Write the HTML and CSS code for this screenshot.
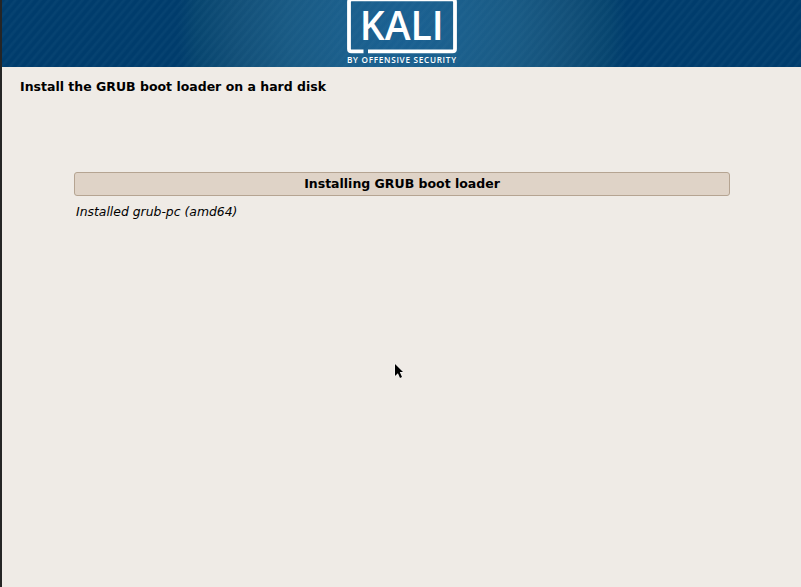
FILE: index.html
```html
<!DOCTYPE html>
<html lang="en">
<head>
<meta charset="utf-8">
<title>Install the GRUB boot loader on a hard disk</title>
<link rel="stylesheet" href="styles.css">
</head>
<body>
<div class="installer">
  <header class="banner">
    <svg class="logo" width="121" height="67" viewBox="0 0 121 67" role="img" aria-label="Kali by Offensive Security">
      <path class="frame" d="M22.500 51.400H10.500q-2.500 0-2.500-2.500V2q0-2.600 2.500-2.600H111.500q2.500 0 2.500 2.600V48.900q0 2.500-2.500 2.500H27"/>
      <text class="name" x="18.800" y="40" textLength="84" lengthAdjust="spacingAndGlyphs">KALI</text>
      <text class="tagline" x="6" y="63" textLength="109">BY OFFENSIVE SECURITY</text>
    </svg>
  </header>
  <main class="content">
    <h1 class="title">Install the GRUB boot loader on a hard disk</h1>
    <section class="task">
      <div class="progress">Installing GRUB boot loader</div>
      <p class="status">Installed grub-pc (amd64)</p>
    </section>
  </main>
</div>
<svg class="pointer" width="10" height="17" viewBox="0 0 10 17" aria-hidden="true">
  <path d="M1 1L9 9H5.800L8 14L6 15L3.900 10.300L1 13Z"/>
</svg>
</body>
</html>
```
FILE: styles.css
```css
* { box-sizing: border-box; }

body {
  margin: 0;
  height: 587px;
  overflow: hidden;
  font-family: "DejaVu Sans", sans-serif;
  font-size: 12.500px;
  line-height: 16px;
  color: #000;
}

.installer {
  height: 587px;
  border-left: 2px solid #252525;
  background: #efebe6;
}

.banner {
  display: flex;
  justify-content: center;
  height: 67px;
  background:
    repeating-linear-gradient(130deg, rgba(70, 130, 165, 0) 0 2px, rgba(70, 130, 165, 0.09) 3.500px 4.500px, rgba(70, 130, 165, 0) 6.400px),
    radial-gradient(circle 225px at 400px 28px, #1a6092 0, #1b5f8c 28%, #195a84 52%, #124f78 75%, #07456f 92%, #003c6c 100%);
}

.logo { display: block; }

.frame {
  fill: none;
  stroke: #fff;
  stroke-width: 3.800px;
}

.name {
  fill: #fff;
  font: 600 39.300px "Open Sans", sans-serif;
}

.tagline {
  fill: #fff;
  font: 600 8.200px "Open Sans", sans-serif;
}

.content { padding: 12px 71px 0 18px; }

.title {
  margin: 0;
  font-size: 12.500px;
  font-weight: bold;
}

.task { margin: 77px 0 0 54px; }

.progress {
  height: 24px;
  border: 1px solid #b5a492;
  border-radius: 3px;
  background: #dfd3c7;
  font-weight: bold;
  line-height: 22px;
  text-align: center;
}

.status {
  margin: 8px 0 0 2px;
  font-size: 12.400px;
  font-style: italic;
}

.pointer {
  position: absolute;
  left: 394px;
  top: 363px;
  fill: #000;
  stroke: #fff;
  stroke-width: 1px;
  paint-order: stroke;
}
```
